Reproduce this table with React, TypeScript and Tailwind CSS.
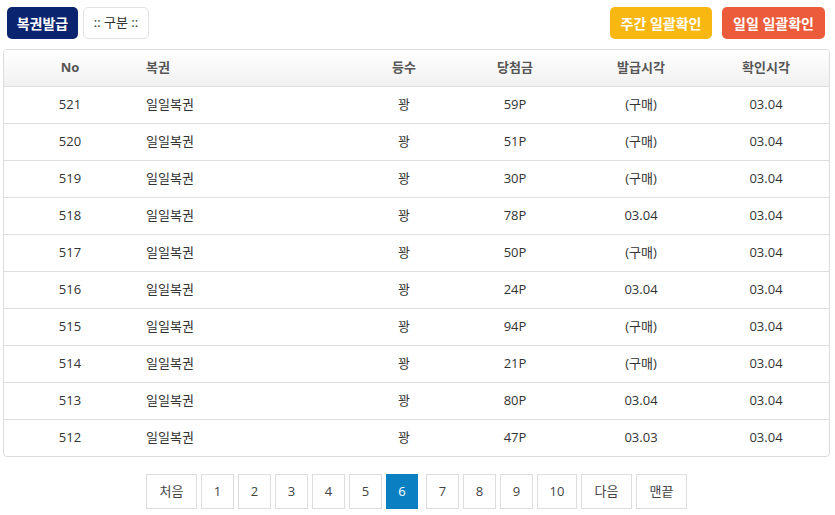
import React from "react";

const rows = [
  ["521", "59P", "(구매)", "03.04"],
  ["520", "51P", "(구매)", "03.04"],
  ["519", "30P", "(구매)", "03.04"],
  ["518", "78P", "03.04", "03.04"],
  ["517", "50P", "(구매)", "03.04"],
  ["516", "24P", "03.04", "03.04"],
  ["515", "94P", "(구매)", "03.04"],
  ["514", "21P", "(구매)", "03.04"],
  ["513", "80P", "03.04", "03.04"],
  ["512", "47P", "03.03", "03.04"],
];

const font = { fontFamily: '"Open Sans", "Noto Sans CJK KR", sans-serif' };

export default function App() {
  const pages = [
    { l: "처음", w: "w-[51px]" },
    { l: "1", w: "w-[33px]" },
    { l: "2", w: "w-[33px]" },
    { l: "3", w: "w-[33px]" },
    { l: "4", w: "w-[33px]" },
    { l: "5", w: "w-[33px]" },
    { l: "6", w: "w-[32px]", active: true },
    { l: "7", w: "w-[33px]" },
    { l: "8", w: "w-[33px]" },
    { l: "9", w: "w-[33px]" },
    { l: "10", w: "w-[40px]" },
    { l: "다음", w: "w-[51px]" },
    { l: "맨끝", w: "w-[51px]" },
  ];
  return (
    <div className="w-[835px] h-[515px] bg-white text-[13px] text-[#333]" style={font}>
      <div className="flex items-center justify-between pt-[7px] pl-[7px] pr-[10px]">
        <div className="flex gap-[5px]">
          <button className="h-[32px] w-[71px] rounded-[5px] bg-[#0b2470] text-white font-bold text-[14px]">복권발급</button>
          <button className="h-[32px] w-[66px] rounded-[5px] border border-[#e3e3e3] bg-white text-[#333] text-[13px]">:: 구분 ::</button>
        </div>
        <div className="flex gap-[10px]">
          <button className="h-[32px] w-[102px] rounded-[5px] bg-[#f8b811] text-white font-bold text-[14px]">주간 일괄확인</button>
          <button className="h-[32px] w-[103px] rounded-[5px] bg-[#ec5b3a] text-white font-bold text-[14px]">일일 일괄확인</button>
        </div>
      </div>
      <div className="ml-[3px] mt-[10px] w-[827px] border border-[#dcdcdc] rounded-[4px] overflow-hidden">
        <table className="w-full table-fixed border-collapse">
          <colgroup>
            <col className="w-[132px]" />
            <col className="w-[221px]" />
            <col className="w-[94px]" />
            <col className="w-[128px]" />
            <col className="w-[124px]" />
            <col />
          </colgroup>
          <thead>
            <tr className="h-[36px] bg-gradient-to-b from-white to-[#f1f1f1] text-[#555] font-bold text-[13px]">
              <th className="text-center font-bold">No</th>
              <th className="text-left pl-[10px] font-bold">복권</th>
              <th className="text-center font-bold">등수</th>
              <th className="text-center font-bold">당첨금</th>
              <th className="text-center font-bold">발급시각</th>
              <th className="text-center font-bold">확인시각</th>
            </tr>
          </thead>
          <tbody>
            {rows.map((r) => (
              <tr key={r[0]} className="h-[37px] border-t border-[#dedede]">
                <td className="text-center">{r[0]}</td>
                <td className="text-left pl-[10px]">일일복권</td>
                <td className="text-center">꽝</td>
                <td className="text-center">{r[1]}</td>
                <td className="text-center">{r[2]}</td>
                <td className="text-center">{r[3]}</td>
              </tr>
            ))}
          </tbody>
        </table>
      </div>
      <div className="flex justify-center mt-[17px] pr-[2px] gap-[4px]">
        {pages.map((p) => (
          <div
            key={p.l}
            className={`${p.w} h-[35px] flex items-center justify-center border text-[13px] ${
              p.active ? "bg-[#0a7fc1] border-[#0a7fc1] text-white mr-[4px]" : "bg-white border-[#dddddd] text-[#444]"
            }`}
          >
            {p.l}
          </div>
        ))}
      </div>
    </div>
  );
}
